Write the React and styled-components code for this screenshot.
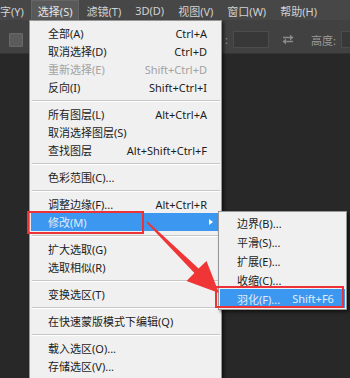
import React from 'react';
import styled, { createGlobalStyle } from 'styled-components';

const GlobalStyle = createGlobalStyle`
  body {
    margin: 0;
    background: #282828;
  }
`;

const mainItems = [
  { label: '全部(A)', keys: 'Ctrl+A' },
  { label: '取消选择(D)', keys: 'Ctrl+D' },
  { label: '重新选择(E)', keys: 'Shift+Ctrl+D', disabled: true },
  { label: '反向(I)', keys: 'Shift+Ctrl+I' },
  'sep',
  { label: '所有图层(L)', keys: 'Alt+Ctrl+A' },
  { label: '取消选择图层(S)' },
  { label: '查找图层', keys: 'Alt+Shift+Ctrl+F' },
  'sep',
  { label: '色彩范围(C)...' },
  'sep',
  { label: '调整边缘(F)...', keys: 'Alt+Ctrl+R' },
  { label: '修改(M)', active: true, submenu: true },
  'sep',
  { label: '扩大选取(G)' },
  { label: '选取相似(R)' },
  'sep',
  { label: '变换选区(T)' },
  'sep',
  { label: '在快速蒙版模式下编辑(Q)' },
  'sep',
  { label: '载入选区(O)...' },
  { label: '存储选区(V)...' },
];

const subItems = [
  { label: '边界(B)...' },
  { label: '平滑(S)...' },
  { label: '扩展(E)...' },
  { label: '收缩(C)...' },
  { label: '羽化(F)...', keys: 'Shift+F6', active: true },
];

const menuBarItems = ['字(Y)', '选择(S)', '滤镜(T)', '3D(D)', '视图(V)', '窗口(W)', '帮助(H)'];

const Frame = styled.div`
  position: relative;
  width: 350px;
  height: 378px;
  overflow: hidden;
  display: flex;
  flex-direction: column;
  background: #282828;
  font-family: "Noto Sans", "Noto Sans CJK SC", sans-serif;
  font-size: 11px;
`;

const MenuBar = styled.div`
  height: 20px;
  display: flex;
  align-items: stretch;
  background: #474747;
  color: #d2d2d2;
`;

const BarItem = styled.div`
  display: flex;
  align-items: center;
  padding: 0 6px;
  margin-left: ${p => (p.$cut ? '-7px' : '0')};
  box-sizing: border-box;
  border: 1px solid ${p => (p.$open ? '#656565' : 'transparent')};
  border-bottom: none;
  background: ${p => (p.$open ? '#595959' : 'transparent')};
  color: ${p => (p.$open ? '#e6e6e6' : '#d2d2d2')};
  white-space: nowrap;
`;

const OptionsBar = styled.div`
  height: 34px;
  box-sizing: border-box;
  padding-top: 6px;
  display: flex;
  align-items: center;
  background: #414141;
  border-bottom: 1px solid #333;
  color: #9c9c9c;
`;

const CheckBox = styled.div`
  flex: none;
  width: 14px;
  height: 14px;
  margin-left: 9px;
  box-sizing: border-box;
  background: #5b5b5b;
  border: 1px solid #686868;
  border-radius: 1px;
`;

const OptLabel = styled.span`
  flex: none;
  margin-left: ${p => p.$gap}px;
  white-space: nowrap;
  color: #9a9a9a;
`;

const OptInput = styled.div`
  flex: none;
  width: 36px;
  height: 17px;
  margin-left: 5px;
  box-sizing: border-box;
  background: #383838;
  border: 1px solid #4c4c4c;
`;

const SwapIcon = styled.svg`
  flex: none;
  margin-left: 13px;
`;

const Workspace = styled.div`
  flex: 1;
  background: #282828;
`;

const Menu = styled.div`
  position: absolute;
  left: 29px;
  top: 20px;
  width: 193px;
  box-sizing: border-box;
  padding: 3px 1px;
  background: #f0f0f0;
  border: 1px solid #979797;
  box-shadow: 2px 2px 3px rgba(0, 0, 0, 0.55);
  z-index: 2;
`;

const Item = styled.div`
  position: relative;
  height: ${p => (p.$sub ? 19 : 18)}px;
  display: flex;
  align-items: center;
  justify-content: space-between;
  padding: ${p => (p.$sub ? '0 12px 0 17px' : '0 13px 0 17px')};
  background: ${p => (p.$active ? '#3b97ef' : 'transparent')};
  color: ${p => (p.$disabled ? '#a2a2a2' : p.$active ? '#e2edfb' : '#1c1c1c')};
  white-space: nowrap;
`;

const Keys = styled.span`
  margin-left: 12px;
`;

const SubArrow = styled.span`
  width: 0;
  height: 0;
  margin-right: -6px;
  border-top: 3.5px solid transparent;
  border-bottom: 3.5px solid transparent;
  border-left: 4px solid #ffffff;
`;

const Separator = styled.div`
  height: 9px;
  margin-left: 1px;
  display: flex;
  align-items: center;

  &::before {
    content: "";
    flex: 1;
    height: 1px;
    background: #c6c6c6;
    box-shadow: 0 1px 0 #ffffff;
  }
`;

const SubMenu = styled.div`
  position: absolute;
  left: 187px;
  top: -2px;
  width: 129px;
  box-sizing: border-box;
  padding: 1px;
  background: #f0f0f0;
  border: 1px solid #979797;
  box-shadow: 2px 2px 3px rgba(0, 0, 0, 0.55);
  z-index: 3;
`;

const RedBox = styled.div`
  position: absolute;
  left: ${p => p.$x}px;
  top: ${p => p.$y}px;
  width: ${p => p.$w}px;
  height: ${p => p.$h}px;
  box-sizing: border-box;
  border: 2px solid #ec3237;
  z-index: 6;
  pointer-events: none;
`;

const ArrowLayer = styled.svg`
  position: absolute;
  left: 0;
  top: 0;
  z-index: 7;
  pointer-events: none;
`;

const renderSub = () => (
  <SubMenu>
    {subItems.map(it => (
      <Item key={it.label} $sub $active={it.active}>
        <span>{it.label}</span>
        {it.keys && <Keys>{it.keys}</Keys>}
      </Item>
    ))}
  </SubMenu>
);

const App = () => {
  return (
    <Frame>
      <GlobalStyle />
      <MenuBar>
        {menuBarItems.map((t, i) => (
          <BarItem key={t} $cut={i === 0} $open={i === 1}>{t}</BarItem>
        ))}
      </MenuBar>
      <OptionsBar>
        <CheckBox />
        <OptLabel $gap={202}>:</OptLabel>
        <OptInput />
        <SwapIcon width="12" height="11" viewBox="0 0 12 11">
          <path d="M1 3.5h8" stroke="#8a8a8a" strokeWidth="1.5" />
          <path d="M8 0.5l3.5 3-3.5 3z" fill="#8a8a8a" />
          <path d="M11 7.5h-8" stroke="#8a8a8a" strokeWidth="1.5" />
          <path d="M4 4.5l-3.5 3 3.5 3z" fill="#8a8a8a" />
        </SwapIcon>
        <OptLabel $gap={17}>高度:</OptLabel>
        <OptInput />
      </OptionsBar>
      <Workspace />

      <Menu>
        {mainItems.map((it, i) =>
          it === 'sep' ? (
            <Separator key={'s' + i} />
          ) : (
            <Item key={it.label} $active={it.active} $disabled={it.disabled}>
              <span>{it.label}</span>
              {it.keys && <Keys>{it.keys}</Keys>}
              {it.submenu && <SubArrow />}
              {it.submenu && renderSub()}
            </Item>
          )
        )}
      </Menu>

      <RedBox $x={27} $y={211} $w={117} $h={23} />
      <RedBox $x={215} $y={286} $w={129} $h={22} />

      <ArrowLayer width="350" height="378" viewBox="0 0 350 378">
        <polygon
          points="147.6,221.4 198.6,268.6 206.5,261 219,293 186.5,281 194.4,272.9 146.4,222.6"
          fill="#ef3535"
        />
      </ArrowLayer>
    </Frame>
  );
};

export default App;
